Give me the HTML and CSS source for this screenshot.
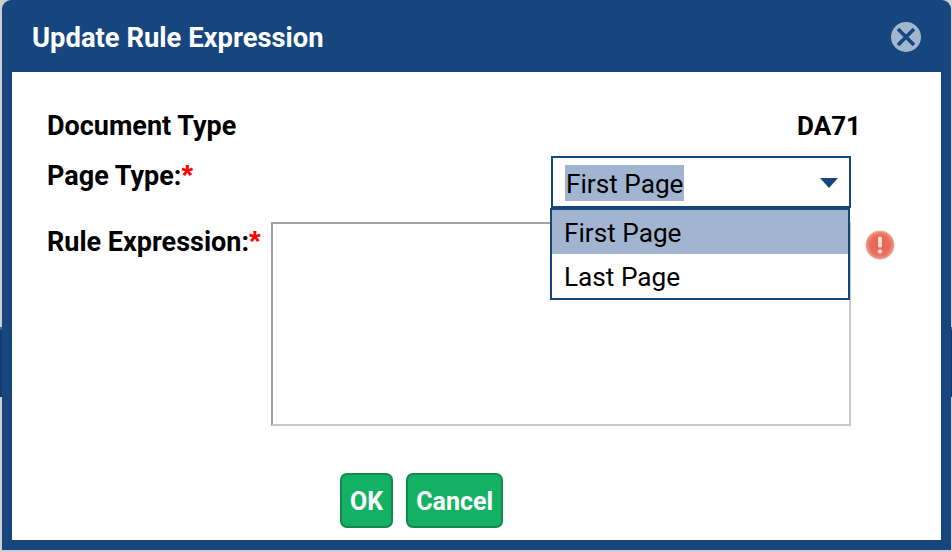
FILE: index.html
```html
<!DOCTYPE html>
<html lang="en">
<head>
<meta charset="utf-8">
<title>Update Rule Expression</title>
<link rel="stylesheet" href="styles.css">
</head>
<body>
<span class="sliver sliver-left"></span>
<span class="sliver sliver-right"></span>
<main class="dialog">
  <header class="dialog-head">
    <h1 class="dialog-title">Update Rule Expression</h1>
    <svg class="close-icon" width="30" height="30" viewBox="0 0 30 30" aria-label="Close">
      <circle cx="15" cy="15" r="15" fill="#a3b6d0"/>
      <path d="M7 7 L23 23 M23 7 L7 23" stroke="#17467f" stroke-width="3.6" fill="none"/>
    </svg>
  </header>
  <section class="dialog-body">
    <div class="row row-doc">
      <span class="label">Document Type</span>
      <span class="doc-value">DA71</span>
    </div>
    <div class="row row-page">
      <span class="label">Page Type:<span class="req">*</span></span>
      <div class="select-wrap">
        <div class="select-box">
          <span class="select-text">First Page</span>
          <span class="caret"></span>
        </div>
        <ul class="menu">
          <li class="menu-item is-active">First Page</li>
          <li class="menu-item">Last Page</li>
        </ul>
      </div>
    </div>
    <div class="row row-rule">
      <span class="label label-rule">Rule Expression:<span class="req">*</span></span>
      <div class="rule-box"></div>
      <svg class="error-icon" width="30" height="30" viewBox="0 0 30 30" aria-label="Error">
        <defs>
          <radialGradient id="err" cx="50%" cy="50%" r="50%">
            <stop offset="0" stop-color="#e9604c"/>
            <stop offset="0.7" stop-color="#e8705f"/>
            <stop offset="0.88" stop-color="#ec8a7b"/>
            <stop offset="1" stop-color="#f3b5aa"/>
          </radialGradient>
        </defs>
        <circle cx="15" cy="15" r="14.5" fill="url(#err)"/>
        <rect x="13" y="6.5" width="4" height="11" rx="1.6" fill="#f9dcd6"/>
        <circle cx="15" cy="21.5" r="2.2" fill="#f9dcd6"/>
      </svg>
    </div>
    <div class="actions">
      <button class="btn" type="button">OK</button>
      <button class="btn" type="button">Cancel</button>
    </div>
  </section>
</main>
</body>
</html>
```

FILE: styles.css
```css
* { box-sizing: border-box; }
html, body { margin: 0; height: 100%; }
body {
  background: #cfcfcf;
  font-family: Roboto, "Liberation Sans", sans-serif;
  color: #000;
  overflow: hidden;
  padding: 0 1px 2px 2px;
}
.sliver {
  position: absolute;
  top: 327px;
  width: 2px;
  height: 70px;
  background: #123a6c;
  border-top: 3px solid #2470b0;
}
.sliver-left { left: 0; }
.sliver-right { right: 0; width: 1px; }
.dialog {
  height: 550px;
  background: #17467f;
  border-radius: 9px 9px 0 0;
  padding: 0 10px 10px;
  display: flex;
  flex-direction: column;
}
.dialog-head {
  height: 72px;
  flex: none;
  display: flex;
  align-items: center;
  justify-content: space-between;
  padding: 0 20px 0 20px;
}
.dialog-head .close-icon { margin-top: 2px; }
.dialog-title {
  margin: 4px 0 0;
  color: #fff;
  font-size: 27.4px;
  font-weight: 700;
  line-height: 30px;
}
.dialog-body {
  flex: 1;
  background: #fff;
  padding: 0 0 0 35px;
  display: flex;
  flex-direction: column;
}
.row { display: flex; }
.label {
  font-size: 27px;
  font-weight: 700;
  line-height: 30px;
}
.req {
  color: #f00;
  font-family: "Liberation Sans", sans-serif;
  font-size: 30px;
  line-height: 20px;
  font-weight: 700;
}
.row-doc {
  margin-top: 39px;
  justify-content: space-between;
  padding-right: 80px;
}
.doc-value {
  font-size: 26px;
  font-weight: 700;
  line-height: 30px;
}
.row-page {
  margin-top: 20px;
  justify-content: space-between;
  padding-right: 90px;
  height: 61px;
}
.select-wrap {
  position: relative;
  width: 300px;
}
.select-box {
  margin-top: -5px;
  height: 52px;
  border: 2px solid #17467f;
  padding: 1px 11px 0 12px;
  display: flex;
  align-items: center;
  justify-content: space-between;
  background: #fff;
}
.select-text {
  font-size: 26.2px;
  line-height: 34px;
  padding: 2px 0 0 1px;
  background: #a2b5d0;
}
.caret {
  width: 0;
  height: 0;
  border-left: 9px solid transparent;
  border-right: 9px solid transparent;
  border-top: 10px solid #17467f;
}
.menu {
  position: absolute;
  z-index: 2;
  left: -1px;
  top: 47px;
  width: 300px;
  margin: 0;
  padding: 0;
  list-style: none;
  border: 2px solid #17467f;
  background: #fff;
}
.menu-item {
  height: 44px;
  font-size: 26.2px;
  line-height: 46px;
  padding-left: 12px;
}
.menu-item.is-active { background: #a2b5d0; }
.row-rule { align-items: flex-start; }
.label-rule {
  width: 224px;
  flex: none;
  white-space: nowrap;
  margin-top: 5px;
}
.rule-box {
  width: 580px;
  height: 204px;
  border: 2px solid #c8c8c8;
  border-top-color: #a0a0a0;
  border-left-color: #a0a0a0;
}
.error-icon { margin: 8px 0 0 14px; }
.actions {
  margin-top: 47px;
  margin-left: 293px;
  display: flex;
  gap: 14px;
}
.btn {
  height: 55px;
  padding: 2px 8px 0;
  background: #14b164;
  border: 2px solid #0d8a4c;
  border-radius: 7px;
  color: #fff;
  font-family: inherit;
  font-size: 25px;
  font-weight: 700;
}
.btn + .btn { margin-left: -1px; }
```
